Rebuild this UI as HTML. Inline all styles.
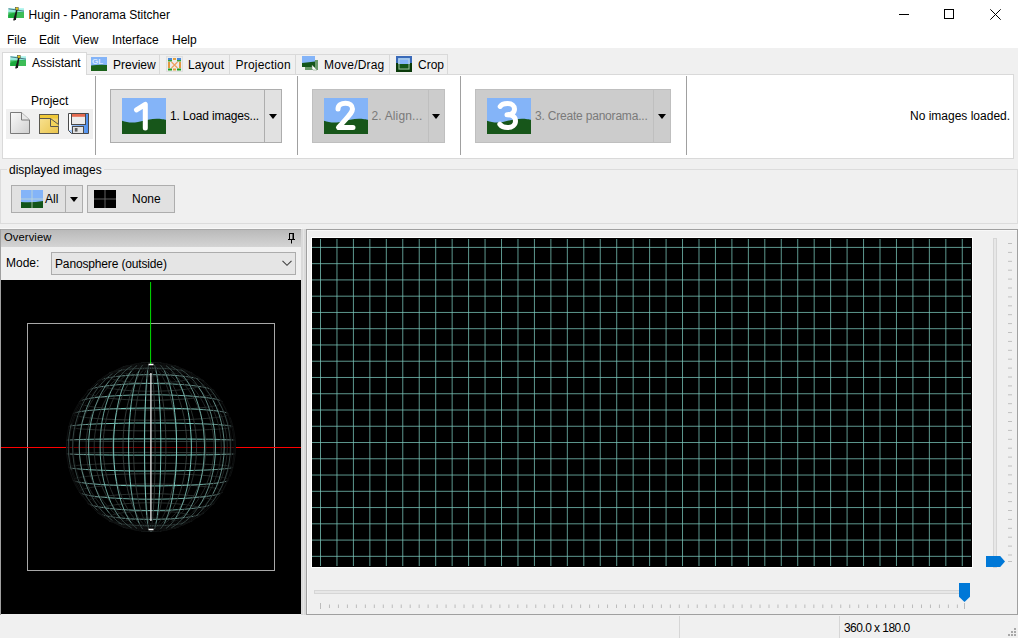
<!DOCTYPE html>
<html><head><meta charset="utf-8">
<style>
*{margin:0;padding:0;box-sizing:border-box}
html,body{width:1018px;height:638px;overflow:hidden;background:#f0f0f0;font-family:"Liberation Sans",sans-serif;font-size:12px;color:#000}
.a{position:absolute}
.t{position:absolute;font-size:12px;line-height:14px;white-space:nowrap}
#titlebar{left:0;top:0;width:1018px;height:48px;background:#fff}
.tab{position:absolute;top:54px;height:21px;border:1px solid #d9d9d9;border-bottom:none;background:#f0f0f0}
.tab.sel{top:52px;height:23px;background:#fff;z-index:2}
#panel{left:2px;top:74px;width:1012px;height:85px;background:#fff;border:1px solid #d9d9d9}
.sep{position:absolute;width:1px;background:#a0a0a0}
.btn{position:absolute;background:#e1e1e1;border:1px solid #adadad}
.btn.dis{background:#cccccc;border-color:#bfbfbf}
.split{position:absolute;top:0;bottom:0;width:1px;background:#adadad}
.dis .split{background:#bfbfbf}
.arrow{position:absolute;width:0;height:0;border-left:4.5px solid transparent;border-right:4.5px solid transparent;border-top:5px solid #000}
</style></head><body>
<div id="titlebar" class="a"></div>
<!-- title icon -->
<svg class="a" style="left:8px;top:6px" width="17" height="16" viewBox="0 0 17 16">
<defs><linearGradient id="hg" x1="0" y1="0" x2="0" y2="1"><stop offset="0" stop-color="#c0f8f4"/><stop offset="0.35" stop-color="#90e8d8"/><stop offset="0.5" stop-color="#40c060"/><stop offset="1" stop-color="#30b050"/></linearGradient></defs>
<rect x="0.2" y="2" width="15.8" height="10" fill="url(#hg)"/>
<path d="M0.2 12 L0.2 9 Q6 5.5 16 6.5 L16 12Z" fill="#18a838" opacity="0.85"/>
<path d="M8 7 L16 7 L16 12 L8 12Z" fill="#60d070" opacity="0.5"/>
<path d="M0.5 2.8 Q6 3.5 16 5.2" stroke="#3a6a78" stroke-width="0.9" fill="none"/>
<path d="M9 3.5 L5.8 14.5 M8.6 5 L7.2 14" stroke="#181818" stroke-width="1.4"/>
<rect x="7.6" y="1.4" width="2.6" height="2.6" fill="#e8c818" stroke="#404030" stroke-width="0.5"/>
</svg>
<div class="t" style="left:28.5px;top:7.5px">Hugin - Panorama Stitcher</div>
<!-- window controls -->
<div class="a" style="left:899px;top:14px;width:10px;height:1px;background:#000"></div>
<div class="a" style="left:944px;top:9px;width:10px;height:10px;border:1px solid #000"></div>
<svg class="a" style="left:990px;top:9px" width="11" height="11" viewBox="0 0 11 11"><path d="M0.3 0.3 L10.7 10.7 M10.7 0.3 L0.3 10.7" stroke="#000" stroke-width="1"/></svg>
<!-- menu -->
<div class="t" style="left:7px;top:32.5px">File</div>
<div class="t" style="left:39px;top:32.5px">Edit</div>
<div class="t" style="left:72.5px;top:32.5px">View</div>
<div class="t" style="left:112px;top:32.5px">Interface</div>
<div class="t" style="left:172px;top:32.5px">Help</div>

<!-- tabs -->
<div class="tab" style="left:86px;width:74px"></div>
<div class="tab" style="left:159px;width:71px"></div>
<div class="tab" style="left:229px;width:67px"></div>
<div class="tab" style="left:295px;width:95px"></div>
<div class="tab" style="left:389px;width:59px"></div>
<div id="panel" class="a"></div>
<div class="tab sel" style="left:2px;width:85px"></div>


<!-- tab icons and labels -->
<svg class="a" style="left:10px;top:54px;z-index:3" width="17" height="16" viewBox="0 0 17 16">
<rect x="0.2" y="2" width="15.8" height="10" fill="url(#hg)"/>
<path d="M0.2 12 L0.2 9 Q6 5.5 16 6.5 L16 12Z" fill="#18a838" opacity="0.85"/>
<path d="M8 7 L16 7 L16 12 L8 12Z" fill="#60d070" opacity="0.5"/>
<path d="M0.5 2.8 Q6 3.5 16 5.2" stroke="#3a6a78" stroke-width="0.9" fill="none"/>
<path d="M9 3.5 L5.8 14.5 M8.6 5 L7.2 14" stroke="#181818" stroke-width="1.4"/>
<rect x="7.6" y="1.4" width="2.6" height="2.6" fill="#e8c818" stroke="#404030" stroke-width="0.5"/>
</svg>
<div class="t" style="left:32px;top:55.5px;z-index:3">Assistant</div>
<svg class="a" style="left:91px;top:57px" width="16" height="14" viewBox="0 0 16 14">
<rect x="0" y="0" width="16" height="9" fill="#84b4f8"/>
<path d="M0 8.5 Q8 7.5 16 8 L16 14 L0 14Z" fill="#1a621a"/>
<text x="1" y="7" font-family="Liberation Sans" font-size="8" font-weight="bold" fill="#d8e8ff">GL</text>
</svg>
<div class="t" style="left:113px;top:58px">Preview</div>
<svg class="a" style="left:166px;top:56px" width="17" height="16" viewBox="0 0 17 16">
<rect x="0.5" y="0.5" width="16" height="15" fill="#ececec" stroke="#e0e0e0" stroke-width="1"/>
<rect x="2" y="2" width="4" height="2" fill="#4a8ad8"/><rect x="2" y="4" width="4" height="1.5" fill="#3aa03a"/>
<rect x="11" y="2" width="4" height="2" fill="#4a8ad8"/><rect x="11" y="4" width="4" height="1.5" fill="#3aa03a"/>
<rect x="7" y="2" width="3" height="2" fill="#e0a040"/>
<rect x="2" y="6" width="2" height="6" fill="#e09a40"/><rect x="13" y="6" width="2" height="6" fill="#e09a40"/>
<path d="M5.5 6 L11.5 12 M11.5 6 L5.5 12" stroke="#eea060" stroke-width="1.2"/>
<rect x="2" y="12.5" width="4" height="2" fill="#20a020"/><rect x="11" y="12.5" width="4" height="2" fill="#20a020"/>
<rect x="7" y="12.5" width="3" height="2" fill="#e0a040"/>
</svg>
<div class="t" style="left:188px;top:58px">Layout</div>
<div class="t" style="left:235.5px;top:58px;letter-spacing:0.2px">Projection</div>
<svg class="a" style="left:302px;top:56px" width="18" height="15" viewBox="0 0 18 15">
<rect x="3" y="4" width="13" height="10" fill="#6a9a6a"/>
<rect x="0" y="0" width="13" height="11" fill="#84b4f8"/>
<path d="M0 7 Q7 6 13 5.5 L13 11 L0 11Z" fill="#13551a"/>
<path d="M10 9 L15 14 L11 14 L10 13Z" fill="#fff" stroke="#6a8a6a" stroke-width="0.5"/>
</svg>
<div class="t" style="left:324px;top:58px;letter-spacing:0.2px">Move/Drag</div>
<svg class="a" style="left:396px;top:56px" width="16" height="16" viewBox="0 0 16 16">
<rect x="0" y="0" width="16" height="16" fill="#0a3a0a"/>
<rect x="0" y="0" width="16" height="7" fill="#3a6ab8"/>
<rect x="2" y="2" width="12" height="6" fill="#84b4f8"/>
<rect x="2" y="8" width="12" height="6" fill="#13551a"/>
<rect x="3" y="3" width="10" height="10" fill="none" stroke="#d8e8d8" stroke-width="1" opacity="0.7"/>
</svg>
<div class="t" style="left:418px;top:58px">Crop</div>

<!-- assistant panel content -->
<div class="t" style="left:31px;top:93.5px">Project</div>
<div class="a" style="left:6px;top:109px;width:87px;height:30px;background:#f0f0f0"></div>
<svg class="a" style="left:9px;top:111px" width="22" height="24" viewBox="0 0 22 24">
<defs><linearGradient id="ng" x1="0" y1="0" x2="1" y2="1"><stop offset="0" stop-color="#fafafa"/><stop offset="1" stop-color="#cfcfcf"/></linearGradient>
<linearGradient id="og" x1="0" y1="0" x2="0" y2="1"><stop offset="0" stop-color="#f8e08a"/><stop offset="1" stop-color="#e8c050"/></linearGradient></defs>
<path d="M1.5 1.5 L12.5 1.5 L20.5 9 L20.5 22.5 L1.5 22.5Z" fill="url(#ng)" stroke="#7a7a7a" stroke-width="1"/>
<path d="M12.5 1.5 L12.5 9 L20.5 9" fill="#e8e8e8" stroke="#7a7a7a" stroke-width="1"/>
</svg>
<svg class="a" style="left:39px;top:113px" width="21" height="22" viewBox="0 0 21 22">
<defs><linearGradient id="og2" x1="0" y1="0" x2="1" y2="1"><stop offset="0" stop-color="#f9e498"/><stop offset="1" stop-color="#eac44a"/></linearGradient>
<linearGradient id="sg" x1="0" y1="0" x2="1" y2="0"><stop offset="0" stop-color="#b8d4f8"/><stop offset="1" stop-color="#4a8ef0"/></linearGradient></defs>
<rect x="0.5" y="1.5" width="19" height="19" fill="url(#og2)" stroke="#5a5850" stroke-width="1"/>
<rect x="1" y="2" width="18" height="3.5" fill="#f0c838"/>
<path d="M11.5 5.5 L19.5 11.5 L19.5 13.5 L11.5 13.5Z" fill="#f3d45a"/>
<path d="M0.5 5.5 H11.5 L19.5 11.5 M11.5 5.5 V13.5 H19.5" fill="none" stroke="#5a5850" stroke-width="1"/>
</svg>
<svg class="a" style="left:68px;top:112px" width="22" height="23" viewBox="0 0 22 23">
<path d="M0.5 1.5 H20.5 V21.5 H3.5 L0.5 18.5Z" fill="url(#sg)" stroke="#4a4a4a" stroke-width="1"/>
<rect x="1" y="2" width="2.5" height="16" fill="#fff"/>
<rect x="3.5" y="1.5" width="14" height="11" fill="#ececec" stroke="#4a4a4a" stroke-width="1"/>
<rect x="4" y="2" width="13" height="2.8" fill="#e46a50"/>
<rect x="4.5" y="14.5" width="11" height="7" fill="#e4e4e4" stroke="#4a4a4a" stroke-width="1"/>
<rect x="6.8" y="16" width="2.7" height="3.6" fill="#606060"/>
</svg>
<div class="sep" style="left:95px;top:76px;height:79px"></div>

<!-- step buttons -->
<div class="btn" style="left:110px;top:89px;width:172px;height:54px"><div class="split" style="left:153px"></div></div>
<svg class="a" style="left:122px;top:98px" width="44" height="36" viewBox="0 0 44 36"><rect width="44" height="36" fill="#84b4f8"/><path d="M0 22.8 C5 24.5 10 25.2 16 24 C24 22 30 20.5 36 20.7 C40 20.8 44 21.8 44 21.8 L44 36 L0 36Z" fill="#17561a"/>
<path d="M14.5 11.8 L23.3 6.3 L23.3 30" fill="none" stroke="#fff" stroke-width="5" stroke-linecap="round" stroke-linejoin="round"/></svg>
<div class="t" style="left:170px;top:108.5px;letter-spacing:-0.18px">1. Load images...</div>
<div class="arrow" style="left:269px;top:114px"></div>
<div class="sep" style="left:297px;top:76px;height:79px"></div>

<div class="btn dis" style="left:312px;top:89px;width:133px;height:54px"><div class="split" style="left:115px"></div></div>
<svg class="a" style="left:324px;top:98px" width="44" height="36" viewBox="0 0 44 36"><rect width="44" height="36" fill="#84b4f8"/><path d="M0 22.8 C5 24.5 10 25.2 16 24 C24 22 30 20.5 36 20.7 C40 20.8 44 21.8 44 21.8 L44 36 L0 36Z" fill="#17561a"/>
<path d="M14 11 C14 7 17.5 5.2 21.5 5.2 C25.5 5.2 28.5 7.5 28.5 11 C28.5 15 24 18.5 14.5 29.5 L29 29.5" fill="none" stroke="#fff" stroke-width="5" stroke-linecap="round" stroke-linejoin="round"/></svg>
<div class="t" style="left:371.5px;top:108.5px;color:#7a7a7a;letter-spacing:0.15px">2. Align...</div>
<div class="arrow" style="left:432px;top:114px"></div>
<div class="sep" style="left:460px;top:76px;height:79px"></div>

<div class="btn dis" style="left:475px;top:89px;width:196px;height:54px"><div class="split" style="left:177px"></div></div>
<svg class="a" style="left:487px;top:98px" width="44" height="36" viewBox="0 0 44 36"><rect width="44" height="36" fill="#84b4f8"/><path d="M0 22.8 C5 24.5 10 25.2 16 24 C24 22 30 20.5 36 20.7 C40 20.8 44 21.8 44 21.8 L44 36 L0 36Z" fill="#17561a"/>
<path d="M13.2 8.5 C14.5 6.2 17.5 5.5 20.5 5.5 C25 5.5 27.5 8 27.5 11 C27.5 14.5 24.5 16.8 20 16.8 C25 16.8 28.5 19 28.5 23 C28.5 27 25 29.5 20.5 29.5 C17 29.5 14.5 28.5 12.8 26.2" fill="none" stroke="#fff" stroke-width="5" stroke-linecap="round" stroke-linejoin="round"/></svg>
<div class="t" style="left:535px;top:108.5px;color:#7a7a7a;letter-spacing:-0.2px">3. Create panorama...</div>
<div class="arrow" style="left:658px;top:114px"></div>
<div class="sep" style="left:686px;top:76px;height:79px"></div>
<div class="t" style="left:910px;top:108.5px">No images loaded.</div>

<!-- GEN -->
<!-- displayed images static box -->
<div class="a" style="left:0px;top:169px;width:1018px;height:55px;border:1px solid #dcdcdc;border-right-color:#dcdcdc"></div>
<div class="a" style="left:7px;top:163px;width:97px;height:12px;background:#f0f0f0"></div>
<div class="t" style="left:9px;top:163px">displayed images</div>
<div class="btn" style="left:11px;top:185px;width:72px;height:28px"><div class="split" style="left:53px"></div></div>
<svg class="a" style="left:21px;top:190px" width="22" height="18" viewBox="0 0 22 18">
<rect width="22" height="18" fill="#84b4f8"/><path d="M0 12 Q11 13 22 11 L22 18 L0 18Z" fill="#13551a"/>
<path d="M11 0 V18 M0 9 H22" stroke="#d0e0d0" stroke-width="1" opacity="0.7"/></svg>
<div class="t" style="left:45px;top:191.5px">All</div>
<div class="arrow" style="left:70px;top:197px"></div>
<div class="btn" style="left:87px;top:185px;width:88px;height:28px"></div>
<svg class="a" style="left:94px;top:190px" width="22" height="18" viewBox="0 0 22 18">
<rect width="22" height="18" fill="#000"/><path d="M11 0 V18 M0 9 H22" stroke="#606060" stroke-width="1"/></svg>
<div class="t" style="left:132px;top:191.5px">None</div>

<!-- overview panel -->
<div class="a" style="left:0px;top:228px;width:302px;height:1px;background:#f8f8f8"></div>
<div class="a" style="left:0px;top:229px;width:302px;height:18px;background:linear-gradient(#a8a8a8 0,#a8a8a8 1px,#bababa 1px,#d4d4d4 100%)"></div>
<div class="a" style="left:0px;top:229px;width:1px;height:386px;background:#a0a0a0"></div>
<div class="t" style="left:4px;top:230px;font-size:11.2px;letter-spacing:0.1px">Overview</div>
<svg class="a" style="left:287px;top:232px" width="9" height="12" viewBox="0 0 9 12"><path d="M2 1.5 H7 M2.5 1 V7 M6.5 1 V7 M1 7.5 H8 M4.5 8 V11.5" stroke="#000" stroke-width="1" fill="none"/><rect x="5.5" y="2" width="1" height="5" fill="#000"/></svg>
<div class="t" style="left:6px;top:255.5px">Mode:</div>
<div class="a" style="left:51px;top:252px;width:245px;height:23px;background:#e5e5e5;border:1px solid #acacac"></div>
<div class="t" style="left:55px;top:257px;letter-spacing:-0.15px">Panosphere (outside)</div>
<svg class="a" style="left:282px;top:260px" width="10" height="7" viewBox="0 0 10 7"><path d="M0.5 0.8 L5 5.3 L9.5 0.8" stroke="#404040" stroke-width="1.1" fill="none"/></svg>
<svg class="a" style="left:1px;top:280px" width="300" height="334">
<rect width="300" height="334" fill="#000"/>
<rect x="26.5" y="43.5" width="247" height="247" fill="none" stroke="#a8a8a8" stroke-width="1"/>
<path d="M0 167.5 H300" stroke="#700000" stroke-width="1"/>
<g fill="none" stroke-width="0.85"><path d="M150.0 83.0 150.6 83.1 151.2 83.1 151.7 83.1 152.3 83.1 152.8 83.2 153.3 83.2 153.8 83.3 154.2 83.4 154.6 83.5 155.0 83.5 155.3 83.6 155.6 83.7 155.9 83.8 156.1 83.9 156.2 84.0 156.3 84.2 156.4 84.3 156.4 84.4M143.4 84.5 143.4 84.3 143.4 84.2 143.5 84.1 143.6 84.0 143.8 83.9 144.0 83.8 144.3 83.7 144.6 83.6 144.9 83.5 145.3 83.4 145.8 83.3 146.2 83.3 146.7 83.2 147.2 83.2 147.8 83.1 148.3 83.1 148.9 83.1 149.4 83.1 150.0 83.0M160.3 83.0 161.7 83.2 163.1 83.5 164.3 83.7 165.4 84.0 166.4 84.2 167.2 84.5 167.9 84.8 168.5 85.2 168.9 85.5 169.2 85.8 169.3 86.1 169.2 86.5M130.5 86.3 130.6 86.0 130.7 85.7 131.1 85.3 131.5 85.0 132.1 84.7 132.9 84.4 133.8 84.1 134.8 83.9 136.0 83.6 137.3 83.4 138.6 83.2 140.1 83.0M177.4 87.0 178.7 87.5 179.8 88.0 180.7 88.5 181.3 89.0 181.6 89.5 181.7 90.0 181.6 90.5M118.1 90.3 118.1 89.8 118.3 89.3 118.8 88.8 119.5 88.3 120.4 87.8 121.6 87.3M191.2 93.2 192.3 93.8 193.0 94.5 193.4 95.1 193.4 95.8 193.1 96.5M106.5 96.2 106.4 95.5 106.5 94.9 107.0 94.2 107.9 93.6M203.0 101.2 203.8 101.9 204.2 102.7 204.1 103.4 203.6 104.1M96.0 103.8 95.6 103.1 95.7 102.4 96.2 101.6M213.4 111.1 213.7 111.9 213.5 112.6 212.8 113.3M86.7 113.0 86.2 112.3 86.2 111.6 86.7 110.8M221.4 121.8 221.6 122.5 221.3 123.2 220.4 123.8M79.0 123.6 78.3 122.9 78.2 122.2 78.6 121.6M227.7 133.8 227.8 134.3 227.3 134.9 226.2 135.4M73.1 135.2 72.2 134.7 72.0 134.1M232.0 146.7 232.0 147.0 231.4 147.4 230.2 147.7M69.0 147.6 68.1 147.2 67.7 146.9M234.1 160.2 234.1 160.3 233.5 160.4 232.2 160.5M67.0 160.5 66.0 160.4 65.6 160.2M234.1 173.8 234.1 173.7 233.5 173.6 232.2 173.5M67.0 173.5 66.0 173.6 65.6 173.8M232.0 187.3 232.0 187.0 231.4 186.6 230.2 186.3M69.0 186.4 68.1 186.8 67.7 187.1M227.7 200.2 227.8 199.7 227.3 199.1 226.2 198.6M73.1 198.8 72.2 199.3 72.0 199.9M221.4 212.2 221.6 211.5 221.3 210.8 220.4 210.2M79.0 210.4 78.3 211.1 78.2 211.8 78.6 212.4M213.4 222.9 213.7 222.1 213.5 221.4 212.8 220.7M86.7 221.0 86.2 221.7 86.2 222.4 86.7 223.2M203.0 232.8 203.8 232.1 204.2 231.3 204.1 230.6 203.6 229.9M96.0 230.2 95.6 230.9 95.7 231.6 96.2 232.4M191.2 240.8 192.3 240.2 193.0 239.5 193.4 238.9 193.4 238.2 193.1 237.5M106.5 237.8 106.4 238.5 106.5 239.1 107.0 239.8 107.9 240.4M177.4 247.0 178.7 246.5 179.8 246.0 180.7 245.5 181.3 245.0 181.6 244.5 181.7 244.0 181.6 243.5M118.1 243.7 118.1 244.2 118.3 244.7 118.8 245.2 119.5 245.7 120.4 246.2 121.6 246.7M160.3 251.0 161.7 250.8 163.1 250.5 164.3 250.3 165.4 250.0 166.4 249.8 167.2 249.5 167.9 249.2 168.5 248.8 168.9 248.5 169.2 248.2 169.3 247.9 169.2 247.5M130.5 247.7 130.6 248.0 130.7 248.3 131.1 248.7 131.5 249.0 132.1 249.3 132.9 249.6 133.8 249.9 134.8 250.1 136.0 250.4 137.3 250.6 138.6 250.8 140.1 251.0M150.0 251.0 150.6 250.9 151.2 250.9 151.7 250.9 152.3 250.9 152.8 250.8 153.3 250.8 153.8 250.7 154.2 250.6 154.6 250.5 155.0 250.5 155.3 250.4 155.6 250.3 155.9 250.2 156.1 250.1 156.2 250.0 156.3 249.8 156.4 249.7 156.4 249.6M143.4 249.5 143.4 249.7 143.4 249.8 143.5 249.9 143.6 250.0 143.8 250.1 144.0 250.2 144.3 250.3 144.6 250.4 144.9 250.5 145.3 250.6 145.8 250.7 146.2 250.7 146.7 250.8 147.2 250.8 147.8 250.9 148.3 250.9 148.9 250.9 149.4 250.9 150.0 251.0" stroke="rgb(15, 17, 16)"/><path d="M156.4 84.4 156.4 84.5 156.3 84.6 156.1 84.7 155.9 84.8 155.7 84.9 155.4 85.0 155.1 85.1 154.8 85.2 154.4 85.3 153.9 85.4 153.5 85.4 153.0 85.5 152.5 85.5 152.0 85.6 151.4 85.6 150.9 85.6 150.3 85.6 149.8 85.6 149.2 85.6 148.7 85.6 148.1 85.6 147.6 85.6 147.1 85.5 146.6 85.5 146.1 85.4 145.7 85.3 145.3 85.3 144.9 85.2 144.6 85.1 144.3 85.0 144.0 84.9 143.8 84.8 143.6 84.7 143.5 84.6 143.4 84.5M169.2 86.5 169.1 86.8 168.7 87.1 168.3 87.4 167.7 87.7 166.9 88.0 166.1 88.3 165.1 88.6 164.1 88.8 162.9 89.0 161.7 89.2 160.3 89.4 158.9 89.6 157.4 89.7 155.9 89.8 154.4 89.9M144.8 89.9 143.3 89.8 141.8 89.6 140.3 89.5 138.9 89.3 137.6 89.1 136.4 88.9 135.3 88.7 134.3 88.5 133.4 88.2 132.6 87.9 131.9 87.6 131.3 87.3 130.9 87.0 130.7 86.7 130.5 86.3M181.6 90.5 181.2 91.0 180.6 91.5 179.8 92.0 178.7 92.5 177.5 92.9 176.1 93.3 174.5 93.7M124.7 93.6 123.1 93.2 121.8 92.7 120.6 92.3 119.7 91.8 118.9 91.3 118.4 90.8 118.1 90.3M193.1 96.5 192.5 97.1 191.6 97.7 190.4 98.3 188.9 98.9 187.1 99.4M111.9 99.2 110.3 98.6 108.9 98.1 107.8 97.5 107.0 96.8 106.5 96.2M203.6 104.1 202.7 104.8 201.5 105.5 199.9 106.1 197.9 106.8M101.1 106.5 99.3 105.9 97.8 105.2 96.7 104.5 96.0 103.8M212.8 113.3 211.6 114.0 210.0 114.7 208.1 115.3M93.1 115.7 90.9 115.1 89.1 114.4 87.7 113.7 86.7 113.0M220.4 123.8 219.0 124.4 217.1 125.1 214.8 125.6M84.0 125.4 81.9 124.8 80.2 124.2 79.0 123.6M226.2 135.4 224.6 135.9 222.5 136.4 219.9 136.8M78.8 136.6 76.4 136.2 74.5 135.7 73.1 135.2M230.2 147.7 228.5 148.0 226.2 148.3M75.2 148.5 72.6 148.2 70.6 147.9 69.0 147.6M232.2 160.5 230.4 160.6 228.0 160.7M73.4 160.8 70.8 160.7 68.6 160.6 67.0 160.5M232.2 173.5 230.4 173.4 228.0 173.3M73.4 173.2 70.8 173.3 68.6 173.4 67.0 173.5M230.2 186.3 228.5 186.0 226.2 185.7M75.2 185.5 72.6 185.8 70.6 186.1 69.0 186.4M226.2 198.6 224.6 198.1 222.5 197.6 219.9 197.2M78.8 197.4 76.4 197.8 74.5 198.3 73.1 198.8M220.4 210.2 219.0 209.6 217.1 208.9 214.8 208.4M84.0 208.6 81.9 209.2 80.2 209.8 79.0 210.4M212.8 220.7 211.6 220.0 210.0 219.3 208.1 218.7M93.1 218.3 90.9 218.9 89.1 219.6 87.7 220.3 86.7 221.0M203.6 229.9 202.7 229.2 201.5 228.5 199.9 227.9 197.9 227.2M101.1 227.5 99.3 228.1 97.8 228.8 96.7 229.5 96.0 230.2M193.1 237.5 192.5 236.9 191.6 236.3 190.4 235.7 188.9 235.1 187.1 234.6M111.9 234.8 110.3 235.4 108.9 235.9 107.8 236.5 107.0 237.2 106.5 237.8M181.6 243.5 181.2 243.0 180.6 242.5 179.8 242.0 178.7 241.5 177.5 241.1 176.1 240.7 174.5 240.3M124.7 240.4 123.1 240.8 121.8 241.3 120.6 241.7 119.7 242.2 118.9 242.7 118.4 243.2 118.1 243.7M169.2 247.5 169.1 247.2 168.7 246.9 168.3 246.6 167.7 246.3 166.9 246.0 166.1 245.7 165.1 245.4 164.1 245.2 162.9 245.0 161.7 244.8 160.3 244.6 158.9 244.4 157.4 244.3 155.9 244.2 154.4 244.1M144.8 244.1 143.3 244.2 141.8 244.4 140.3 244.5 138.9 244.7 137.6 244.9 136.4 245.1 135.3 245.3 134.3 245.5 133.4 245.8 132.6 246.1 131.9 246.4 131.3 246.7 130.9 247.0 130.7 247.3 130.5 247.7M156.4 249.6 156.4 249.5 156.3 249.4 156.1 249.3 155.9 249.2 155.7 249.1 155.4 249.0 155.1 248.9 154.8 248.8 154.4 248.7 153.9 248.6 153.5 248.6 153.0 248.5 152.5 248.5 152.0 248.4 151.4 248.4 150.9 248.4 150.3 248.4 149.8 248.4 149.2 248.4 148.7 248.4 148.1 248.4 147.6 248.4 147.1 248.5 146.6 248.5 146.1 248.6 145.7 248.7 145.3 248.7 144.9 248.8 144.6 248.9 144.3 249.0 144.0 249.1 143.8 249.2 143.6 249.3 143.5 249.4 143.4 249.5" stroke="rgb(25, 29, 29)"/><path d="M154.4 89.9 152.8 90.0 151.2 90.0 149.6 90.0 148.0 90.0 146.4 89.9 144.8 89.9M174.5 93.7 172.7 94.1 170.8 94.4 168.7 94.7 166.6 95.0 164.3 95.2 162.0 95.4 159.5 95.6 157.0 95.7 154.5 95.8 152.0 95.9 149.4 95.9 146.8 95.8 144.3 95.8 141.8 95.7 139.3 95.5 136.9 95.3 134.6 95.1 132.3 94.9 130.2 94.6 128.2 94.3 126.4 93.9 124.7 93.6M187.1 99.4 185.1 99.9 182.9 100.4 180.5 100.9 177.9 101.3 175.1 101.6 172.2 102.0 169.1 102.2M132.5 102.4 129.4 102.1 126.4 101.8 123.6 101.5 120.9 101.1 118.3 100.7 116.0 100.2 113.8 99.7 111.9 99.2M197.9 106.8 195.7 107.4 193.2 107.9 190.4 108.4 187.3 108.9 184.1 109.4M114.4 109.2 111.2 108.7 108.3 108.2 105.6 107.7 103.2 107.1 101.1 106.5M208.1 115.3 205.7 115.9 203.0 116.5 200.0 117.1 196.7 117.6M105.2 117.9 101.7 117.4 98.6 116.9 95.7 116.3 93.1 115.7M214.8 125.6 212.1 126.2 209.0 126.7 205.6 127.2M96.4 127.5 92.8 127.0 89.5 126.5 86.6 126.0 84.0 125.4M219.9 136.8 217.0 137.2 213.6 137.7 209.8 138.0M88.4 137.9 84.8 137.5 81.6 137.1 78.8 136.6M226.2 148.3 223.4 148.6 220.2 148.9 216.7 149.2 212.7 149.4M85.5 149.3 81.7 149.1 78.2 148.8 75.2 148.5M228.0 160.7 225.2 160.8 221.9 160.9 218.2 161.0M84.0 161.1 80.1 161.0 76.5 160.9 73.4 160.8M228.0 173.3 225.2 173.2 221.9 173.1 218.2 173.0M84.0 172.9 80.1 173.0 76.5 173.1 73.4 173.2M226.2 185.7 223.4 185.4 220.2 185.1 216.7 184.8 212.7 184.6M85.5 184.7 81.7 184.9 78.2 185.2 75.2 185.5M219.9 197.2 217.0 196.8 213.6 196.3 209.8 196.0M88.4 196.1 84.8 196.5 81.6 196.9 78.8 197.4M214.8 208.4 212.1 207.8 209.0 207.3 205.6 206.8M96.4 206.5 92.8 207.0 89.5 207.5 86.6 208.0 84.0 208.6M208.1 218.7 205.7 218.1 203.0 217.5 200.0 216.9 196.7 216.4M105.2 216.1 101.7 216.6 98.6 217.1 95.7 217.7 93.1 218.3M197.9 227.2 195.7 226.6 193.2 226.1 190.4 225.6 187.3 225.1 184.1 224.6M114.4 224.8 111.2 225.3 108.3 225.8 105.6 226.3 103.2 226.9 101.1 227.5M187.1 234.6 185.1 234.1 182.9 233.6 180.5 233.1 177.9 232.7 175.1 232.4 172.2 232.0 169.1 231.8M132.5 231.6 129.4 231.9 126.4 232.2 123.6 232.5 120.9 232.9 118.3 233.3 116.0 233.8 113.8 234.3 111.9 234.8M174.5 240.3 172.7 239.9 170.8 239.6 168.7 239.3 166.6 239.0 164.3 238.8 162.0 238.6 159.5 238.4 157.0 238.3 154.5 238.2 152.0 238.1 149.4 238.1 146.8 238.2 144.3 238.2 141.8 238.3 139.3 238.5 136.9 238.7 134.6 238.9 132.3 239.1 130.2 239.4 128.2 239.7 126.4 240.1 124.7 240.4M154.4 244.1 152.8 244.0 151.2 244.0 149.6 244.0 148.0 244.0 146.4 244.1 144.8 244.1" stroke="rgb(36, 42, 41)"/><path d="M169.1 102.2 166.0 102.5 162.7 102.7 159.4 102.8 156.0 102.9 152.6 103.0 149.2 103.0 145.8 103.0 142.4 102.9 139.1 102.8 135.8 102.6 132.5 102.4M184.1 109.4 180.7 109.7 177.1 110.1 173.3 110.4 169.5 110.7 165.5 110.9 161.5 111.0 157.4 111.1 153.2 111.2 149.1 111.2 144.9 111.2 140.8 111.1 136.7 111.0 132.7 110.8 128.8 110.6 125.0 110.3 121.3 110.0 117.7 109.6 114.4 109.2M196.7 117.6 193.2 118.1 189.4 118.5 185.4 118.9 181.2 119.2 176.9 119.5 172.4 119.7 167.8 119.9M134.7 120.0 130.1 119.9 125.6 119.6 121.2 119.4 116.9 119.1 112.8 118.7 108.9 118.3 105.2 117.9M205.6 127.2 201.9 127.6 197.9 128.0 193.6 128.4 189.2 128.8 184.5 129.1M118.1 129.2 113.4 128.9 108.8 128.6 104.4 128.3 100.3 127.9 96.4 127.5M209.8 138.0 205.8 138.4 201.4 138.7 196.9 139.0 192.0 139.3M105.8 139.2 101.1 138.9 96.6 138.6 92.4 138.2 88.4 137.9M212.7 149.4 208.4 149.6 203.8 149.8 199.0 150.0M103.8 150.1 98.8 150.0 94.1 149.8 89.6 149.5 85.5 149.3M218.2 161.0 214.1 161.1 209.7 161.2 205.1 161.2 200.1 161.3M97.7 161.3 92.8 161.2 88.3 161.1 84.0 161.1M218.2 173.0 214.1 172.9 209.7 172.8 205.1 172.8 200.1 172.7M97.7 172.7 92.8 172.8 88.3 172.9 84.0 172.9M212.7 184.6 208.4 184.4 203.8 184.2 199.0 184.0M103.8 183.9 98.8 184.0 94.1 184.2 89.6 184.5 85.5 184.7M209.8 196.0 205.8 195.6 201.4 195.3 196.9 195.0 192.0 194.7M105.8 194.8 101.1 195.1 96.6 195.4 92.4 195.8 88.4 196.1M205.6 206.8 201.9 206.4 197.9 206.0 193.6 205.6 189.2 205.2 184.5 204.9M118.1 204.8 113.4 205.1 108.8 205.4 104.4 205.7 100.3 206.1 96.4 206.5M196.7 216.4 193.2 215.9 189.4 215.5 185.4 215.1 181.2 214.8 176.9 214.5 172.4 214.3 167.8 214.1M134.7 214.0 130.1 214.1 125.6 214.4 121.2 214.6 116.9 214.9 112.8 215.3 108.9 215.7 105.2 216.1M184.1 224.6 180.7 224.3 177.1 223.9 173.3 223.6 169.5 223.3 165.5 223.1 161.5 223.0 157.4 222.9 153.2 222.8 149.1 222.8 144.9 222.8 140.8 222.9 136.7 223.0 132.7 223.2 128.8 223.4 125.0 223.7 121.3 224.0 117.7 224.4 114.4 224.8M169.1 231.8 166.0 231.5 162.7 231.3 159.4 231.2 156.0 231.1 152.6 231.0 149.2 231.0 145.8 231.0 142.4 231.1 139.1 231.2 135.8 231.4 132.5 231.6" stroke="rgb(47, 55, 53)"/><path d="M167.8 119.9 163.2 120.1 158.5 120.2 153.7 120.3 148.9 120.3 144.2 120.2 139.4 120.2 134.7 120.0M184.5 129.1 179.7 129.3 174.8 129.5 169.7 129.7 164.6 129.8 159.4 129.9 154.1 130.0 148.8 130.0 143.6 130.0 138.3 129.9 133.2 129.8 128.1 129.6 123.0 129.4 118.1 129.2M192.0 139.3 187.0 139.5 181.9 139.7 176.5 139.9 171.1 140.0 165.6 140.1 160.0 140.2 154.4 140.2 148.8 140.2 143.1 140.2 137.5 140.1 132.0 140.1 126.5 139.9 121.1 139.8 115.9 139.6 110.7 139.4 105.8 139.2M199.0 150.0 194.0 150.2 188.7 150.3 183.3 150.5 177.7 150.6 172.1 150.7 166.3 150.7 160.5 150.8 154.6 150.8 148.7 150.8 142.8 150.8 137.0 150.8 131.2 150.7 125.5 150.6 119.8 150.5 114.3 150.4 109.0 150.3 103.8 150.1M200.1 161.3 194.9 161.4 189.6 161.4 184.0 161.5 178.3 161.5 172.5 161.5 166.7 161.6 160.7 161.6 154.7 161.6 148.7 161.6 142.7 161.6 136.7 161.6 130.8 161.5 124.9 161.5 119.2 161.5 113.6 161.4 108.1 161.4 102.8 161.3 97.7 161.3M200.1 172.7 194.9 172.6 189.6 172.6 184.0 172.5 178.3 172.5 172.5 172.5 166.7 172.4 160.7 172.4 154.7 172.4 148.7 172.4 142.7 172.4 136.7 172.4 130.8 172.5 124.9 172.5 119.2 172.5 113.6 172.6 108.1 172.6 102.8 172.7 97.7 172.7M199.0 184.0 194.0 183.8 188.7 183.7 183.3 183.5 177.7 183.4 172.1 183.3 166.3 183.3 160.5 183.2 154.6 183.2 148.7 183.2 142.8 183.2 137.0 183.2 131.2 183.3 125.5 183.4 119.8 183.5 114.3 183.6 109.0 183.7 103.8 183.9M192.0 194.7 187.0 194.5 181.9 194.3 176.5 194.1 171.1 194.0 165.6 193.9 160.0 193.8 154.4 193.8 148.8 193.8 143.1 193.8 137.5 193.9 132.0 193.9 126.5 194.1 121.1 194.2 115.9 194.4 110.7 194.6 105.8 194.8M184.5 204.9 179.7 204.7 174.8 204.5 169.7 204.3 164.6 204.2 159.4 204.1 154.1 204.0 148.8 204.0 143.6 204.0 138.3 204.1 133.2 204.2 128.1 204.4 123.0 204.6 118.1 204.8M167.8 214.1 163.2 213.9 158.5 213.8 153.7 213.7 148.9 213.7 144.2 213.8 139.4 213.8 134.7 214.0" stroke="rgb(58, 67, 65)"/><path d="M150.3 82.5 152.0 82.5 153.8 82.5 155.5 82.6 157.2 82.7 158.8 82.9 160.3 83.0M140.1 83.0 141.7 82.8 143.3 82.7 145.0 82.6 146.7 82.5 148.5 82.5 150.3 82.5M150.5 84.1 153.5 84.1 156.4 84.2 159.3 84.3 162.1 84.5 164.8 84.8 167.4 85.0 169.8 85.4 172.0 85.7 174.0 86.1 175.8 86.5 177.4 87.0M121.6 87.3 123.0 86.8 124.7 86.4 126.6 86.0 128.7 85.6 131.0 85.2 133.4 84.9 136.0 84.7 138.8 84.4 141.6 84.3 144.5 84.2 147.5 84.1 150.5 84.1M180.7 90.3 183.5 90.8 185.9 91.3 188.0 91.9 189.8 92.6 191.2 93.2M107.9 93.6 109.1 92.9 110.7 92.3 112.6 91.7 114.8 91.1 117.4 90.6M195.5 98.4 198.0 99.0 200.1 99.7 201.8 100.5 203.0 101.2M96.2 101.6 97.2 100.9 98.6 100.2 100.4 99.5 102.7 98.8M209.4 108.9 211.3 109.6 212.6 110.4 213.4 111.1M86.7 110.8 87.7 110.1 89.2 109.3 91.3 108.6M217.3 119.8 219.3 120.5 220.7 121.1 221.4 121.8M78.6 121.6 79.6 120.9 81.2 120.2M225.5 132.7 226.9 133.2 227.7 133.8M72.0 134.1 72.3 133.6 73.3 133.0 75.0 132.5M229.9 146.0 231.3 146.3 232.0 146.7M67.7 146.9 68.0 146.6 69.0 146.2 70.7 145.8M232.1 159.9 233.5 160.0 234.1 160.2M65.6 160.2 65.8 160.1 66.8 160.0M232.1 174.1 233.5 174.0 234.1 173.8M65.6 173.8 65.8 173.9 66.8 174.0M229.9 188.0 231.3 187.7 232.0 187.3M67.7 187.1 68.0 187.4 69.0 187.8 70.7 188.2M225.5 201.3 226.9 200.8 227.7 200.2M72.0 199.9 72.3 200.4 73.3 201.0 75.0 201.5M217.3 214.2 219.3 213.5 220.7 212.9 221.4 212.2M78.6 212.4 79.6 213.1 81.2 213.8M209.4 225.1 211.3 224.4 212.6 223.6 213.4 222.9M86.7 223.2 87.7 223.9 89.2 224.7 91.3 225.4M195.5 235.6 198.0 235.0 200.1 234.3 201.8 233.5 203.0 232.8M96.2 232.4 97.2 233.1 98.6 233.8 100.4 234.5 102.7 235.2M180.7 243.7 183.5 243.2 185.9 242.7 188.0 242.1 189.8 241.4 191.2 240.8M107.9 240.4 109.1 241.1 110.7 241.7 112.6 242.3 114.8 242.9 117.4 243.4M150.5 249.9 153.5 249.9 156.4 249.8 159.3 249.7 162.1 249.5 164.8 249.2 167.4 249.0 169.8 248.6 172.0 248.3 174.0 247.9 175.8 247.5 177.4 247.0M121.6 246.7 123.0 247.2 124.7 247.6 126.6 248.0 128.7 248.4 131.0 248.8 133.4 249.1 136.0 249.3 138.8 249.6 141.6 249.7 144.5 249.8 147.5 249.9 150.5 249.9M150.3 251.5 152.0 251.5 153.8 251.5 155.5 251.4 157.2 251.3 158.8 251.1 160.3 251.0M140.1 251.0 141.7 251.2 143.3 251.3 145.0 251.4 146.7 251.5 148.5 251.5 150.3 251.5" stroke="rgb(89, 108, 105)"/><path d="M150.7 88.1 155.0 88.1 159.1 88.2 163.2 88.4 167.1 88.7 170.9 89.0 174.4 89.4 177.7 89.8 180.7 90.3M117.4 90.6 120.2 90.1 123.4 89.6 126.8 89.2 130.4 88.9 134.3 88.6 138.2 88.3 142.3 88.2 146.5 88.1 150.7 88.1M181.1 96.1 185.3 96.6 189.1 97.1 192.5 97.7 195.5 98.4M102.7 98.8 105.5 98.1 108.7 97.5 112.2 96.9 116.2 96.4 120.5 95.9M196.6 106.2 200.6 106.8 204.1 107.5 207.0 108.2 209.4 108.9M91.3 108.6 93.9 107.9 97.1 107.2 100.7 106.6M211.4 118.5 214.7 119.1 217.3 119.8M81.2 120.2 83.5 119.5 86.4 118.9 89.8 118.2M217.2 131.1 220.7 131.6 223.5 132.2 225.5 132.7M75.0 132.5 77.4 131.9 80.4 131.4M224.9 145.3 227.7 145.6 229.9 146.0M70.7 145.8 73.1 145.5 76.3 145.2M227.0 159.7 229.9 159.8 232.1 159.9M66.8 160.0 68.5 159.9 71.0 159.8 74.2 159.6M227.0 174.3 229.9 174.2 232.1 174.1M66.8 174.0 68.5 174.1 71.0 174.2 74.2 174.4M224.9 188.7 227.7 188.4 229.9 188.0M70.7 188.2 73.1 188.5 76.3 188.8M217.2 202.9 220.7 202.4 223.5 201.8 225.5 201.3M75.0 201.5 77.4 202.1 80.4 202.6M211.4 215.5 214.7 214.9 217.3 214.2M81.2 213.8 83.5 214.5 86.4 215.1 89.8 215.8M196.6 227.8 200.6 227.2 204.1 226.5 207.0 225.8 209.4 225.1M91.3 225.4 93.9 226.1 97.1 226.8 100.7 227.4M181.1 237.9 185.3 237.4 189.1 236.9 192.5 236.3 195.5 235.6M102.7 235.2 105.5 235.9 108.7 236.5 112.2 237.1 116.2 237.6 120.5 238.1M150.7 245.9 155.0 245.9 159.1 245.8 163.2 245.6 167.1 245.3 170.9 245.0 174.4 244.6 177.7 244.2 180.7 243.7M117.4 243.4 120.2 243.9 123.4 244.4 126.8 244.8 130.4 245.1 134.3 245.4 138.2 245.7 142.3 245.8 146.5 245.9 150.7 245.9" stroke="rgb(104, 136, 132)"/><path d="M151.0 94.6 156.4 94.6 161.7 94.8 166.9 95.0 171.9 95.3 176.6 95.6 181.1 96.1M120.5 95.9 125.1 95.5 129.9 95.1 135.0 94.9 140.2 94.7 145.6 94.6 151.0 94.6M176.2 104.3 181.9 104.6 187.2 105.1 192.1 105.6 196.6 106.2M100.7 106.6 104.9 106.0 109.6 105.4 114.7 104.9 120.1 104.5 125.9 104.1M192.5 116.3 198.1 116.8 203.1 117.3 207.6 117.9 211.4 118.5M89.8 118.2 93.9 117.6 98.6 117.1 103.9 116.6M208.3 130.1 213.1 130.6 217.2 131.1M80.4 131.4 84.1 130.9 88.5 130.4 93.6 130.0M211.9 144.3 216.9 144.6 221.3 145.0 224.9 145.3M76.3 145.2 80.2 144.8 84.8 144.5M218.9 159.5 223.3 159.6 227.0 159.7M74.2 159.6 78.1 159.5 82.9 159.4M218.9 174.5 223.3 174.4 227.0 174.3M74.2 174.4 78.1 174.5 82.9 174.6M211.9 189.7 216.9 189.4 221.3 189.0 224.9 188.7M76.3 188.8 80.2 189.2 84.8 189.5M208.3 203.9 213.1 203.4 217.2 202.9M80.4 202.6 84.1 203.1 88.5 203.6 93.6 204.0M192.5 217.7 198.1 217.2 203.1 216.7 207.6 216.1 211.4 215.5M89.8 215.8 93.9 216.4 98.6 216.9 103.9 217.4M176.2 229.7 181.9 229.4 187.2 228.9 192.1 228.4 196.6 227.8M100.7 227.4 104.9 228.0 109.6 228.6 114.7 229.1 120.1 229.5 125.9 229.9M151.0 239.4 156.4 239.4 161.7 239.2 166.9 239.0 171.9 238.7 176.6 238.4 181.1 237.9M120.5 238.1 125.1 238.5 129.9 238.9 135.0 239.1 140.2 239.3 145.6 239.4 151.0 239.4" stroke="rgb(117, 166, 159)"/><path d="M151.2 103.5 157.7 103.6 164.0 103.7 170.2 103.9 176.2 104.3M125.9 104.1 132.0 103.8 138.3 103.7 144.7 103.5 151.2 103.5M151.4 114.8 158.8 114.8 166.1 115.0 173.2 115.2 180.0 115.5 186.5 115.8 192.5 116.3M103.9 116.6 109.6 116.1 115.8 115.7 122.5 115.4 129.4 115.1 136.6 114.9 144.0 114.8 151.4 114.8M183.1 128.7 190.2 129.0 196.8 129.3 202.8 129.7 208.3 130.1M93.6 130.0 99.3 129.5 105.6 129.2 112.4 128.8 119.7 128.6M192.7 143.6 199.7 143.8 206.1 144.0 211.9 144.3M84.8 144.5 90.1 144.2 96.2 143.9 102.8 143.7M201.2 159.2 207.8 159.2 213.7 159.3 218.9 159.5M82.9 159.4 88.4 159.3 94.5 159.2 101.4 159.1M201.2 174.8 207.8 174.8 213.7 174.7 218.9 174.5M82.9 174.6 88.4 174.7 94.5 174.8 101.4 174.9M192.7 190.4 199.7 190.2 206.1 190.0 211.9 189.7M84.8 189.5 90.1 189.8 96.2 190.1 102.8 190.3M183.1 205.3 190.2 205.0 196.8 204.7 202.8 204.3 208.3 203.9M93.6 204.0 99.3 204.5 105.6 204.8 112.4 205.2 119.7 205.4M151.4 219.2 158.8 219.2 166.1 219.0 173.2 218.8 180.0 218.5 186.5 218.2 192.5 217.7M103.9 217.4 109.6 217.9 115.8 218.3 122.5 218.6 129.4 218.9 136.6 219.1 144.0 219.2 151.4 219.2M151.2 230.5 157.7 230.4 164.0 230.3 170.2 230.1 176.2 229.7M125.9 229.9 132.0 230.2 138.3 230.3 144.7 230.5 151.2 230.5" stroke="rgb(129, 198, 188)"/><path d="M151.5 128.1 159.7 128.1 167.8 128.3 175.6 128.4 183.1 128.7M119.7 128.6 127.3 128.3 135.2 128.2 143.4 128.1 151.5 128.1M151.6 143.0 160.3 143.0 168.9 143.1 177.2 143.2 185.2 143.4 192.7 143.6M102.8 143.7 110.0 143.5 117.7 143.3 125.9 143.1 134.3 143.0 142.9 143.0 151.6 143.0M151.7 158.9 160.7 158.9 169.5 158.9 178.1 159.0 186.3 159.0 194.0 159.1 201.2 159.2M101.4 159.1 108.8 159.0 116.7 159.0 125.1 158.9 133.8 158.9 142.7 158.9 151.7 158.9M151.7 175.1 160.7 175.1 169.5 175.1 178.1 175.0 186.3 175.0 194.0 174.9 201.2 174.8M101.4 174.9 108.8 175.0 116.7 175.0 125.1 175.1 133.8 175.1 142.7 175.1 151.7 175.1M151.6 191.0 160.3 191.0 168.9 190.9 177.2 190.8 185.2 190.6 192.7 190.4M102.8 190.3 110.0 190.5 117.7 190.7 125.9 190.9 134.3 191.0 142.9 191.0 151.6 191.0M151.5 205.9 159.7 205.9 167.8 205.7 175.6 205.6 183.1 205.3M119.7 205.4 127.3 205.7 135.2 205.8 143.4 205.9 151.5 205.9" stroke="rgb(139, 232, 218)"/><path d="M149.9 249.9 150.6 251.0 151.3 251.6M151.3 82.4 150.6 83.0 149.9 84.1M149.9 249.9 151.7 251.0 153.6 251.5M153.6 82.5 151.7 83.0 149.9 84.1M149.9 249.9 152.8 250.9 155.8 251.3 158.9 251.1M158.9 82.9 155.8 82.7 152.8 83.1 149.9 84.1M149.9 249.9 153.8 250.8 157.9 251.1 162.0 250.7M162.0 83.3 157.9 82.9 153.8 83.2 149.9 84.1M149.9 249.9 154.8 250.7 159.7 250.8 164.7 250.3M164.7 83.7 159.7 83.2 154.8 83.3 149.9 84.1M149.9 249.9 155.5 250.5 161.3 250.5 167.0 249.8 172.8 248.4M172.8 85.6 167.0 84.2 161.3 83.5 155.5 83.5 149.9 84.1M149.9 249.9 156.2 250.3 162.5 250.1 168.9 249.2 175.2 247.7 181.4 245.5M181.4 88.5 175.2 86.3 168.9 84.8 162.5 83.9 156.2 83.7 149.9 84.1M149.9 249.9 156.7 250.1 163.5 249.7 170.2 248.6 177.0 246.9 183.5 244.5 189.9 241.5 196.1 237.9M196.1 96.1 189.9 92.5 183.5 89.5 177.0 87.1 170.2 85.4 163.5 84.3 156.7 83.9 149.9 84.1M149.9 249.9 157.0 249.9 164.1 249.2 171.1 248.0 178.0 246.1 184.7 243.5 191.3 240.4 197.5 236.6 203.4 232.3 208.9 227.5 214.0 222.1 218.6 216.3 222.7 210.1 226.2 203.5 229.2 196.6M229.2 137.4 226.2 130.5 222.7 123.9 218.6 117.7 214.0 111.9 208.9 106.5 203.4 101.7 197.5 97.4 191.3 93.6 184.7 90.5 178.0 87.9 171.1 86.0 164.1 84.8 157.0 84.1 149.9 84.1M149.9 249.9 157.1 249.7 164.3 248.8 171.4 247.3 178.3 245.2 185.0 242.5 191.5 239.2 197.7 235.4 203.5 231.0 208.9 226.1 213.9 220.8 218.4 215.0 222.3 208.9 225.7 202.4 228.5 195.7 230.8 188.7 232.4 181.6 233.3 174.3 233.7 167.0 233.3 159.7 232.4 152.4 230.8 145.3 228.5 138.3 225.7 131.6 222.3 125.1 218.4 119.0 213.9 113.2 208.9 107.9 203.5 103.0 197.7 98.6 191.5 94.8 185.0 91.5 178.3 88.8 171.4 86.7 164.3 85.2 157.1 84.3 149.9 84.1M149.9 249.9 142.7 249.5M142.7 84.5 149.9 84.1M149.9 249.9 142.7 249.7 135.5 248.9 128.4 247.5 121.5 245.4 114.7 242.7 108.2 239.5 102.0 235.7 96.2 231.3 90.8 226.4 85.8 221.1 81.2 215.3 77.2 209.1 73.8 202.7 70.9 195.9 68.7 188.9 67.1 181.7 66.1 174.4 65.8 167.0 66.1 159.6 67.1 152.3 68.7 145.1 70.9 138.1 73.8 131.3 77.2 124.9 81.2 118.7 85.8 112.9 90.8 107.6 96.2 102.7 102.0 98.3 108.2 94.5 114.7 91.3 121.5 88.6 128.4 86.5 135.5 85.1 142.7 84.3 149.9 84.1M149.9 249.9 142.9 249.9 135.8 249.3 128.9 248.1 122.0 246.2 115.3 243.7 108.7 240.6 102.5 236.9 96.6 232.6 91.1 227.8 86.0 222.4 81.4 216.6M81.4 117.4 86.0 111.6 91.1 106.2 96.6 101.4 102.5 97.1 108.7 93.4 115.3 90.3 122.0 87.8 128.9 85.9 135.8 84.7 142.9 84.1 149.9 84.1M149.9 249.9 143.2 250.2 136.5 249.8 129.8 248.8 123.2 247.1 116.7 244.7 110.3 241.8M110.3 92.2 116.7 89.3 123.2 86.9 129.8 85.2 136.5 84.2 143.2 83.8 149.9 84.1M149.9 249.9 143.7 250.4 137.5 250.2 131.3 249.4 125.1 247.9M125.1 86.1 131.3 84.6 137.5 83.8 143.7 83.6 149.9 84.1M149.9 249.9 144.4 250.5 138.9 250.6 133.3 249.9 127.7 248.6M127.7 85.4 133.3 84.1 138.9 83.4 144.4 83.5 149.9 84.1M149.9 249.9 145.2 250.7 140.5 250.9 135.7 250.4M135.7 83.6 140.5 83.1 145.2 83.3 149.9 84.1M149.9 249.9 146.2 250.8 142.4 251.1 138.5 250.8M138.5 83.2 142.4 82.9 146.2 83.2 149.9 84.1M149.9 249.9 147.2 250.9 144.4 251.4M144.4 82.6 147.2 83.1 149.9 84.1M149.9 249.9 148.3 251.0 146.7 251.5M146.7 82.5 148.3 83.0 149.9 84.1M149.9 249.9 149.5 251.0 149.0 251.6M149.0 82.4 149.5 83.0 149.9 84.1" stroke="rgb(3, 3, 3)"/><path d="M149.9 249.9 157.1 249.4 164.2 248.4 171.1 246.7 177.9 244.4 184.5 241.5 190.8 238.1 196.7 234.2 202.3 229.7 207.5 224.8 212.2 219.5 216.4 213.8 220.2 207.8 223.4 201.4 226.1 194.8 228.1 188.1 229.7 181.1 230.6 174.1 230.9 167.0 230.6 159.9 229.7 152.9 228.1 145.9 226.1 139.2 223.4 132.6 220.2 126.2 216.4 120.2 212.2 114.5 207.5 109.2 202.3 104.3 196.7 99.8 190.8 95.9 184.5 92.5 177.9 89.6 171.1 87.3 164.2 85.6 157.1 84.6 149.9 84.1M149.9 249.9 156.9 249.2 163.7 247.9 170.4 246.0 176.9 243.6 183.1 240.6 189.0 237.0 194.6 233.0 199.9 228.5 204.7 223.6 209.1 218.3 213.0 212.7 216.5 206.7 219.5 200.5M219.5 133.5 216.5 127.3 213.0 121.3 209.1 115.7 204.7 110.4 199.9 105.5 194.6 101.0 189.0 97.0 183.1 93.4 176.9 90.4 170.4 88.0 163.7 86.1 156.9 84.8 149.9 84.1M149.9 249.9 156.5 249.0 162.9 247.5 169.2 245.4 175.2 242.8 181.0 239.7 186.5 236.0 191.6 231.9M191.6 102.1 186.5 98.0 181.0 94.3 175.2 91.2 169.2 88.6 162.9 86.5 156.5 85.0 149.9 84.1M149.9 249.9 155.9 248.8 161.8 247.1 167.5 244.9 173.0 242.1 178.2 238.9M178.2 95.1 173.0 91.9 167.5 89.1 161.8 86.9 155.9 85.2 149.9 84.1M149.9 249.9 155.2 248.6 160.4 246.8 165.4 244.4 170.2 241.5M170.2 92.5 165.4 89.6 160.4 87.2 155.2 85.4 149.9 84.1M149.9 249.9 154.4 248.5 158.8 246.5 163.0 244.0M163.0 90.0 158.8 87.5 154.4 85.5 149.9 84.1M149.9 249.9 153.5 248.4 157.0 246.3 160.3 243.6M160.3 90.4 157.0 87.7 153.5 85.6 149.9 84.1M149.9 249.9 152.5 248.3 155.0 246.1 157.4 243.4M157.4 90.6 155.0 87.9 152.5 85.7 149.9 84.1M149.9 249.9 151.4 248.2 152.9 246.0 154.3 243.2M154.3 90.8 152.9 88.0 151.4 85.8 149.9 84.1M149.9 249.9 150.3 248.2 150.7 245.9 151.1 243.1M151.1 90.9 150.7 88.1 150.3 85.8 149.9 84.1M149.9 249.9 149.2 248.2 148.6 245.9 147.9 243.1M147.9 90.9 148.6 88.1 149.2 85.8 149.9 84.1M149.9 249.9 148.1 248.2 146.4 246.0 144.8 243.2M144.8 90.8 146.4 88.0 148.1 85.8 149.9 84.1M149.9 249.9 147.1 248.3 144.3 246.1 141.7 243.4M141.7 90.6 144.3 87.9 147.1 85.7 149.9 84.1M149.9 249.9 146.1 248.4 142.4 246.3 138.9 243.7M138.9 90.3 142.4 87.7 146.1 85.6 149.9 84.1M149.9 249.9 145.2 248.5 140.6 246.6 136.2 244.1 132.0 241.1M132.0 92.9 136.2 89.9 140.6 87.4 145.2 85.5 149.9 84.1M149.9 249.9 144.4 248.7 139.0 246.9 133.9 244.5 128.9 241.6M128.9 92.4 133.9 89.5 139.0 87.1 144.4 85.3 149.9 84.1M149.9 249.9 143.7 248.9 137.7 247.2 131.9 245.0 126.3 242.3 121.0 239.0M121.0 95.0 126.3 91.7 131.9 89.0 137.7 86.8 143.7 85.1 149.9 84.1M149.9 249.9 143.2 249.1 136.7 247.6 130.3 245.6 124.2 243.0 118.3 239.9 112.7 236.2 107.4 232.2 102.6 227.6M102.6 106.4 107.4 101.8 112.7 97.8 118.3 94.1 124.2 91.0 130.3 88.4 136.7 86.4 143.2 84.9 149.9 84.1M149.9 249.9 142.9 249.3 136.0 248.0 129.2 246.2 122.6 243.8 116.3 240.8 110.3 237.3 104.6 233.3 99.3 228.8 94.4 223.9 89.9 218.6 85.9 212.9 82.3 206.9 79.3 200.7 76.8 194.2 74.9 187.6 73.5 180.8 72.6 173.9 72.3 167.0 72.6 160.1 73.5 153.2 74.9 146.4 76.8 139.8 79.3 133.3 82.3 127.1 85.9 121.1 89.9 115.4 94.4 110.1 99.3 105.2 104.6 100.7 110.3 96.7 116.3 93.2 122.6 90.2 129.2 87.8 136.0 86.0 142.9 84.7 149.9 84.1M142.7 249.5 135.6 248.5 128.6 246.8 121.7 244.6 115.1 241.7 108.8 238.3 102.8 234.4 97.1 230.0 91.9 225.1 87.1 219.8 82.8 214.1 79.0 208.0 75.7 201.6 73.0 195.0 70.9 188.2 69.4 181.2 68.5 174.1 68.2 167.0 68.5 159.9 69.4 152.8 70.9 145.8 73.0 139.0 75.7 132.4 79.0 126.0 82.8 119.9 87.1 114.2 91.9 108.9 97.1 104.0 102.8 99.6 108.8 95.7 115.1 92.3 121.7 89.4 128.6 87.2 135.6 85.5 142.7 84.5" stroke="rgb(15, 17, 17)"/><path d="M219.5 200.5 221.9 194.1 223.8 187.5 225.2 180.7 226.0 173.9 226.3 167.0 226.0 160.1 225.2 153.3 223.8 146.5 221.9 139.9 219.5 133.5M191.6 231.9 196.4 227.4 200.8 222.5 204.8 217.2 208.4 211.6 211.5 205.8 214.1 199.7 216.4 193.4 218.1 186.9 219.3 180.3 220.1 173.7 220.3 167.0 220.1 160.3 219.3 153.7 218.1 147.1 216.4 140.6 214.1 134.3 211.5 128.2 208.4 122.4 204.8 116.8 200.8 111.5 196.4 106.6 191.6 102.1M178.2 238.9 183.1 235.1 187.7 231.0 191.9 226.4 195.8 221.5 199.4 216.2 202.5 210.7 205.3 204.9M205.3 129.1 202.5 123.3 199.4 117.8 195.8 112.5 191.9 107.6 187.7 103.0 183.1 98.9 178.2 95.1M170.2 241.5 174.7 238.1 179.0 234.3 183.0 230.1 186.7 225.5 190.0 220.6M190.0 113.4 186.7 108.5 183.0 103.9 179.0 99.7 174.7 95.9 170.2 92.5M163.0 244.0 167.0 241.0 170.8 237.5 174.4 233.6 177.7 229.4M177.7 104.6 174.4 100.4 170.8 96.5 167.0 93.0 163.0 90.0M160.3 243.6 163.5 240.6 166.5 237.0 169.3 233.1 171.9 228.8M171.9 105.2 169.3 100.9 166.5 97.0 163.5 93.4 160.3 90.4M157.4 243.4 159.7 240.2 161.8 236.6 163.8 232.7M163.8 101.3 161.8 97.4 159.7 93.8 157.4 90.6M154.3 243.2 155.7 240.0 156.9 236.4 158.1 232.4M158.1 101.6 156.9 97.6 155.7 94.0 154.3 90.8M151.1 243.1 151.5 239.9 151.9 236.3 152.2 232.3M152.2 101.7 151.9 97.7 151.5 94.1 151.1 90.9M147.9 243.1 147.4 239.9 146.8 236.3 146.3 232.3M146.3 101.7 146.8 97.7 147.4 94.1 147.9 90.9M144.8 243.2 143.2 240.1 141.8 236.4 140.4 232.4M140.4 101.6 141.8 97.6 143.2 93.9 144.8 90.8M141.7 243.4 139.3 240.3 136.9 236.7 134.8 232.8M134.8 101.2 136.9 97.3 139.3 93.7 141.7 90.6M138.9 243.7 135.5 240.6 132.3 237.1 129.4 233.2 126.6 228.9M126.6 105.1 129.4 100.8 132.3 96.9 135.5 93.4 138.9 90.3M132.0 241.1 128.1 237.7 124.4 233.8 120.9 229.5 117.7 224.9M117.7 109.1 120.9 104.5 124.4 100.2 128.1 96.3 132.0 92.9M128.9 241.6 124.2 238.3 119.8 234.5 115.7 230.3 111.9 225.7 108.4 220.8M108.4 113.2 111.9 108.3 115.7 103.7 119.8 99.5 124.2 95.7 128.9 92.4M121.0 239.0 115.9 235.3 111.2 231.2 106.8 226.6 102.8 221.7 99.1 216.4 95.9 210.9 93.0 205.1 90.6 199.1M90.6 134.9 93.0 128.9 95.9 123.1 99.1 117.6 102.8 112.3 106.8 107.4 111.2 102.8 115.9 98.7 121.0 95.0M102.6 227.6 98.1 222.7 94.0 217.4 90.3 211.9 87.1 206.0 84.4 199.8 82.1 193.5 80.3 187.0 79.1 180.4 78.3 173.7 78.0 167.0 78.3 160.3 79.1 153.6 80.3 147.0 82.1 140.5 84.4 134.2 87.1 128.0 90.3 122.1 94.0 116.6 98.1 111.3 102.6 106.4" stroke="rgb(36, 42, 41)"/><path d="M205.3 204.9 207.6 198.9 209.6 192.8 211.1 186.4 212.2 180.0 212.8 173.5 213.0 167.0 212.8 160.5 212.2 154.0 211.1 147.6 209.6 141.2 207.6 135.1 205.3 129.1M190.0 220.6 193.1 215.4 195.8 209.9 198.1 204.2 200.1 198.3 201.8 192.2 203.1 186.0 204.0 179.7 204.5 173.4 204.7 167.0 204.5 160.6 204.0 154.3 203.1 148.0 201.8 141.8 200.1 135.7 198.1 129.8 195.8 124.1 193.1 118.6 190.0 113.4M177.7 229.4 180.7 224.8 183.5 219.8 186.0 214.6 188.2 209.2 190.2 203.6 191.8 197.7 193.2 191.8M193.2 142.2 191.8 136.3 190.2 130.4 188.2 124.8 186.0 119.4 183.5 114.2 180.7 109.2 177.7 104.6M171.9 228.8 174.2 224.2 176.4 219.2 178.4 214.1 180.1 208.7M180.1 125.3 178.4 119.9 176.4 114.8 174.2 109.8 171.9 105.2M163.8 232.7 165.6 228.4 167.3 223.7 168.9 218.8 170.3 213.6M170.3 120.4 168.9 115.2 167.3 110.3 165.6 105.6 163.8 101.3M158.1 232.4 159.2 228.1 160.1 223.4 161.0 218.5 161.9 213.3M161.9 120.7 161.0 115.5 160.1 110.6 159.2 105.9 158.1 101.6M152.2 232.3 152.5 227.9 152.8 223.3 153.0 218.4M153.0 115.6 152.8 110.7 152.5 106.1 152.2 101.7M146.3 232.3 145.8 227.9 145.4 223.3 145.0 218.4M145.0 115.6 145.4 110.7 145.8 106.1 146.3 101.7M140.4 232.4 139.2 228.1 138.0 223.5 137.0 218.6 136.1 213.4M136.1 120.6 137.0 115.4 138.0 110.5 139.2 105.9 140.4 101.6M134.8 232.8 132.7 228.4 130.9 223.8 129.2 218.9 127.7 213.7M127.7 120.3 129.2 115.1 130.9 110.2 132.7 105.6 134.8 101.2M126.6 228.9 124.1 224.3 121.8 219.4 119.7 214.2 117.8 208.8 116.2 203.2M116.2 130.8 117.8 125.2 119.7 119.8 121.8 114.6 124.1 109.7 126.6 105.1M117.7 224.9 114.8 220.0 112.2 214.8 109.8 209.3 107.8 203.7 106.1 197.8 104.7 191.9 103.6 185.7M103.6 148.3 104.7 142.1 106.1 136.2 107.8 130.3 109.8 124.7 112.2 119.2 114.8 114.0 117.7 109.1M108.4 220.8 105.3 215.5 102.5 210.1 100.0 204.3 97.9 198.4 96.2 192.3 94.9 186.1 93.9 179.8 93.3 173.4 93.2 167.0 93.3 160.6 93.9 154.2 94.9 147.9 96.2 141.7 97.9 135.6 100.0 129.7 102.5 123.9 105.3 118.5 108.4 113.2M90.6 199.1 88.6 192.9 87.1 186.5 86.0 180.1 85.3 173.6 85.1 167.0 85.3 160.4 86.0 153.9 87.1 147.5 88.6 141.1 90.6 134.9" stroke="rgb(47, 55, 53)"/><path d="M193.2 191.8 194.2 185.7 195.0 179.5 195.4 173.3 195.6 167.0 195.4 160.7 195.0 154.5 194.2 148.3 193.2 142.2M180.1 208.7 181.6 203.1 182.9 197.3 183.9 191.4 184.7 185.4 185.3 179.3 185.7 173.2 185.8 167.0 185.7 160.8 185.3 154.7 184.7 148.6 183.9 142.6 182.9 136.7 181.6 130.9 180.1 125.3M170.3 213.6 171.5 208.3 172.6 202.7 173.5 197.0 174.2 191.1 174.8 185.2 175.2 179.2 175.4 173.1 175.5 167.0 175.4 160.9 175.2 154.8 174.8 148.8 174.2 142.9 173.5 137.0 172.6 131.3 171.5 125.7 170.3 120.4M161.9 213.3 162.6 208.0 163.2 202.5 163.7 196.8 164.1 191.0 164.5 185.0 164.7 179.1 164.9 173.0 164.9 167.0 164.9 161.0 164.7 154.9 164.5 149.0 164.1 143.0 163.7 137.2 163.2 131.5 162.6 126.0 161.9 120.7M153.0 218.4 153.3 213.2 153.5 207.9 153.6 202.3 153.8 196.7 153.9 190.9 154.0 185.0 154.1 179.0 154.1 173.0 154.1 167.0 154.1 161.0 154.1 155.0 154.0 149.0 153.9 143.1 153.8 137.3 153.6 131.7 153.5 126.1 153.3 120.8 153.0 115.6M145.0 218.4 144.6 213.2 144.3 207.9 144.0 202.4 143.8 196.7 143.6 190.9 143.5 185.0 143.4 179.0 143.3 173.0 143.3 167.0 143.3 161.0 143.4 155.0 143.5 149.0 143.6 143.1 143.8 137.3 144.0 131.6 144.3 126.1 144.6 120.8 145.0 115.6M136.1 213.4 135.2 208.0 134.5 202.5 133.9 196.8 133.4 191.0 133.0 185.1 132.7 179.1 132.6 173.1 132.5 167.0 132.6 160.9 132.7 154.9 133.0 148.9 133.4 143.0 133.9 137.2 134.5 131.5 135.2 126.0 136.1 120.6M127.7 213.7 126.4 208.3 125.2 202.8 124.2 197.0 123.4 191.2 122.8 185.2 122.3 179.2 122.1 173.1 122.0 167.0 122.1 160.9 122.3 154.8 122.8 148.8 123.4 142.8 124.2 137.0 125.2 131.2 126.4 125.7 127.7 120.3M116.2 203.2 114.9 197.4 113.8 191.5 112.9 185.4 112.3 179.3 111.9 173.2 111.8 167.0 111.9 160.8 112.3 154.7 112.9 148.6 113.8 142.5 114.9 136.6 116.2 130.8M103.6 185.7 102.8 179.5 102.3 173.3 102.1 167.0 102.3 160.7 102.8 154.5 103.6 148.3" stroke="rgb(58, 67, 65)"/><path d="M151.3 251.6 152.1 251.4 152.8 250.6 153.6 249.0M153.6 85.0 152.8 83.4 152.1 82.6 151.3 82.4M153.6 251.5 155.6 251.3 157.5 250.4 159.5 248.8M159.5 85.2 157.5 83.6 155.6 82.7 153.6 82.5M158.9 251.1 162.0 250.1 165.0 248.4M165.0 85.6 162.0 83.9 158.9 82.9M162.0 250.7 166.1 249.7 170.2 247.9M170.2 86.1 166.1 84.3 162.0 83.3M164.7 250.3 169.7 249.1 174.7 247.2 179.6 244.6M179.6 89.4 174.7 86.8 169.7 84.9 164.7 83.7M172.8 248.4 178.5 246.4 184.1 243.7 189.5 240.2 194.7 236.2M194.7 97.8 189.5 93.8 184.1 90.3 178.5 87.6 172.8 85.6M181.4 245.5 187.5 242.6 193.4 239.1 199.0 234.9 204.3 230.1 209.2 224.8M209.2 109.2 204.3 103.9 199.0 99.1 193.4 94.9 187.5 91.4 181.4 88.5M196.1 237.9 201.9 233.6 207.4 228.8 212.5 223.5 217.1 217.6 221.2 211.3 224.8 204.5 227.7 197.4 230.1 190.1 231.8 182.5 232.8 174.8 233.1 167.0 232.8 159.2 231.8 151.5 230.1 143.9 227.7 136.6 224.8 129.5 221.2 122.7 217.1 116.4 212.5 110.5 207.4 105.2 201.9 100.4 196.1 96.1M229.2 196.6 231.5 189.4 233.1 182.0 234.2 174.5 234.5 167.0 234.2 159.5 233.1 152.0 231.5 144.6 229.2 137.4M81.4 216.6 77.3 210.3 73.7 203.7 70.8 196.8 68.4 189.5 66.8 182.1 65.8 174.6 65.4 167.0 65.8 159.4 66.8 151.9 68.4 144.5 70.8 137.2 73.7 130.3 77.3 123.7 81.4 117.4M110.3 241.8 104.2 238.2 98.4 233.9 92.9 229.1 87.9 223.7 83.3 217.9 79.2 211.5 75.6 204.8 72.7 197.6 70.3 190.2M70.3 143.8 72.7 136.4 75.6 129.2 79.2 122.5 83.3 116.1 87.9 110.3 92.9 104.9 98.4 100.1 104.2 95.8 110.3 92.2M125.1 247.9 118.9 245.7 113.0 242.9 107.2 239.4 101.6 235.2 96.4 230.4M96.4 103.6 101.6 98.8 107.2 94.6 113.0 91.1 118.9 88.3 125.1 86.1M127.7 248.6 122.1 246.6 116.7 243.9 111.4 240.5M111.4 93.5 116.7 90.1 122.1 87.4 127.7 85.4M135.7 250.4 130.9 249.2 126.1 247.4 121.3 244.8M121.3 89.2 126.1 86.6 130.9 84.8 135.7 83.6M138.5 250.8 134.6 249.8 130.7 248.0M130.7 86.0 134.6 84.2 138.5 83.2M144.4 251.4 141.6 251.1 138.8 250.2 136.0 248.5M136.0 85.5 138.8 83.8 141.6 82.9 144.4 82.6M146.7 251.5 145.0 251.3 143.3 250.5 141.6 248.9M141.6 85.1 143.3 83.5 145.0 82.7 146.7 82.5M149.0 251.6 148.5 251.4 148.0 250.6 147.6 249.0M147.6 85.0 148.0 83.4 148.5 82.6 149.0 82.4" stroke="rgb(16, 19, 19)"/><path d="M153.6 249.0 154.3 246.7 155.0 243.7M155.0 90.3 154.3 87.3 153.6 85.0M159.5 248.8 161.4 246.5 163.3 243.4M163.3 90.6 161.4 87.5 159.5 85.2M165.0 248.4 168.1 246.0 171.1 242.9 174.0 239.0M174.0 95.0 171.1 91.1 168.1 88.0 165.0 85.6M170.2 247.9 174.2 245.4 178.2 242.2 182.0 238.2M182.0 95.8 178.2 91.8 174.2 88.6 170.2 86.1M179.6 244.6 184.4 241.3 189.0 237.3 193.3 232.6 197.4 227.2M197.4 106.8 193.3 101.4 189.0 96.7 184.4 92.7 179.6 89.4M194.7 236.2 199.6 231.4 204.2 226.0 208.4 220.1 212.1 213.6M212.1 120.4 208.4 113.9 204.2 108.0 199.6 102.6 194.7 97.8M209.2 224.8 213.7 218.9 217.7 212.4 221.2 205.6 224.1 198.3 226.4 190.8 228.0 183.0 229.1 175.0 229.4 167.0 229.1 159.0 228.0 151.0 226.4 143.2 224.1 135.7 221.2 128.4 217.7 121.6 213.7 115.1 209.2 109.2M70.3 190.2 68.7 182.6 67.6 174.8 67.3 167.0 67.6 159.2 68.7 151.4 70.3 143.8M96.4 230.4 91.5 225.1 87.1 219.1 83.1 212.7 79.7 205.8 76.8 198.5 74.6 190.9 72.9 183.1 71.9 175.1 71.6 167.0 71.9 158.9 72.9 150.9 74.6 143.1 76.8 135.5 79.7 128.2 83.1 121.3 87.1 114.9 91.5 108.9 96.4 103.6M111.4 240.5 106.3 236.4 101.5 231.7 97.0 226.3 92.9 220.3 89.2 213.8M89.2 120.2 92.9 113.7 97.0 107.7 101.5 102.3 106.3 97.6 111.4 93.5M121.3 244.8 116.7 241.5 112.3 237.5 108.1 232.8M108.1 101.2 112.3 96.5 116.7 92.5 121.3 89.2M130.7 248.0 126.9 245.6 123.1 242.3 119.5 238.4M119.5 95.6 123.1 91.7 126.9 88.4 130.7 86.0M136.0 248.5 133.2 246.1 130.4 243.0M130.4 91.0 133.2 87.9 136.0 85.5M141.6 248.9 140.0 246.6 138.3 243.5M138.3 90.5 140.0 87.4 141.6 85.1M147.6 249.0 147.1 246.7 146.6 243.7M146.6 90.3 147.1 87.3 147.6 85.0" stroke="rgb(60, 79, 77)"/><path d="M155.0 243.7 155.8 239.8 156.4 235.2M156.4 98.8 155.8 94.2 155.0 90.3M163.3 243.4 165.1 239.5 166.9 234.9 168.6 229.6M168.6 104.4 166.9 99.1 165.1 94.5 163.3 90.6M174.0 239.0 176.8 234.3 179.4 229.0M179.4 105.0 176.8 99.7 174.0 95.0M182.0 238.2 185.7 233.6 189.1 228.2 192.2 222.2 195.1 215.5M195.1 118.5 192.2 111.8 189.1 105.8 185.7 100.4 182.0 95.8M197.4 227.2 201.2 221.2 204.6 214.6 207.5 207.5 210.0 200.0 211.9 192.1M211.9 141.9 210.0 134.0 207.5 126.5 204.6 119.4 201.2 112.8 197.4 106.8M212.1 213.6 215.4 206.6 218.2 199.2 220.3 191.5 221.9 183.5 222.9 175.3 223.2 167.0 222.9 158.7 221.9 150.5 220.3 142.5 218.2 134.8 215.4 127.4 212.1 120.4M89.2 213.8 86.0 206.8 83.3 199.4 81.1 191.6 79.6 183.6 78.6 175.3 78.3 167.0 78.6 158.7 79.6 150.4 81.1 142.4 83.3 134.6 86.0 127.2 89.2 120.2M108.1 232.8 104.1 227.4 100.5 221.4 97.2 214.8 94.3 207.7 92.0 200.2M92.0 133.8 94.3 126.3 97.2 119.2 100.5 112.6 104.1 106.6 108.1 101.2M119.5 238.4 116.0 233.7 112.8 228.4 109.8 222.4M109.8 111.6 112.8 105.6 116.0 100.3 119.5 95.6M130.4 243.0 127.7 239.1 125.2 234.5 122.8 229.1M122.8 104.9 125.2 99.5 127.7 94.9 130.4 91.0M138.3 243.5 136.7 239.6 135.2 235.0 133.7 229.7M133.7 104.3 135.2 99.0 136.7 94.4 138.3 90.5M146.6 243.7 146.2 239.8 145.7 235.2M145.7 98.8 146.2 94.2 146.6 90.3" stroke="rgb(109, 155, 148)"/><path d="M156.4 235.2 157.1 229.9 157.7 223.8 158.2 217.1M158.2 116.9 157.7 110.2 157.1 104.1 156.4 98.8M168.6 229.6 170.1 223.5 171.5 216.8 172.7 209.5M172.7 124.5 171.5 117.2 170.1 110.5 168.6 104.4M179.4 229.0 181.8 223.0 183.9 216.3 185.8 209.0 187.4 201.3M187.4 132.7 185.8 125.0 183.9 117.7 181.8 111.0 179.4 105.0M195.1 215.5 197.5 208.4 199.6 200.7 201.3 192.6 202.5 184.3 203.2 175.7 203.5 167.0 203.2 158.3 202.5 149.7 201.3 141.4 199.6 133.3 197.5 125.6 195.1 118.5M211.9 192.1 213.4 183.9 214.2 175.5 214.5 167.0 214.2 158.5 213.4 150.1 211.9 141.9M92.0 200.2 90.0 192.2 88.7 184.0 87.8 175.5 87.6 167.0 87.8 158.5 88.7 150.0 90.0 141.8 92.0 133.8M109.8 222.4 107.1 215.7 104.7 208.5 102.7 200.8 101.1 192.7 100.0 184.3 99.3 175.7 99.1 167.0 99.3 158.3 100.0 149.7 101.1 141.3 102.7 133.2 104.7 125.5 107.1 118.3 109.8 111.6M122.8 229.1 120.5 223.1 118.5 216.4 116.8 209.1 115.3 201.4M115.3 132.6 116.8 124.9 118.5 117.6 120.5 110.9 122.8 104.9M133.7 229.7 132.4 223.6 131.2 216.9 130.1 209.6M130.1 124.4 131.2 117.1 132.4 110.4 133.7 104.3M145.7 235.2 145.3 229.9 144.9 223.8 144.6 217.1M144.6 116.9 144.9 110.2 145.3 104.1 145.7 98.8" stroke="rgb(124, 191, 181)"/><path d="M158.2 217.1 158.7 209.7 159.1 201.9 159.4 193.6 159.6 184.9 159.8 176.0 159.8 167.0 159.8 158.0 159.6 149.1 159.4 140.4 159.1 132.1 158.7 124.3 158.2 116.9M172.7 209.5 173.7 201.7 174.6 193.4 175.2 184.8 175.5 176.0 175.6 167.0 175.5 158.0 175.2 149.2 174.6 140.6 173.7 132.3 172.7 124.5M187.4 201.3 188.7 193.1 189.6 184.6 190.2 175.8 190.4 167.0 190.2 158.2 189.6 149.4 188.7 140.9 187.4 132.7M115.3 201.4 114.1 193.2 113.3 184.6 112.7 175.9 112.6 167.0 112.7 158.1 113.3 149.4 114.1 140.8 115.3 132.6M130.1 209.6 129.3 201.7 128.5 193.4 128.0 184.8 127.7 176.0 127.6 167.0 127.7 158.0 128.0 149.2 128.5 140.6 129.3 132.3 130.1 124.4M144.6 217.1 144.3 209.8 144.0 201.9 143.8 193.6 143.7 184.9 143.6 176.0 143.6 167.0 143.6 158.0 143.7 149.1 143.8 140.4 144.0 132.1 144.3 124.2 144.6 116.9" stroke="rgb(138, 229, 216)"/></g>
<path d="M0 167.5 H65 M235 167.5 H300" stroke="#ff0000" stroke-width="1"/>
<path d="M149.6 2 V84" stroke="#00e000" stroke-width="1"/>
<path d="M149.9 93 V241" stroke="#dcdcdc" stroke-width="1.4"/>
<path d="M147.5 84.5 H152.5 M147.5 249.5 H152.5" stroke="#fff" stroke-width="1.5"/>
</svg>
<!-- sash -->
<div class="a" style="left:301px;top:229px;width:5px;height:386px;background:#dadada"></div>
<div class="a" style="left:303px;top:229px;width:1px;height:386px;background:#e6e6e6"></div>
<!-- main preview panel -->
<div class="a" style="left:306px;top:229px;width:712px;height:386px;border:1px solid #a0a0a0;border-right-color:#a0a0a0;background:#f0f0f0"></div>
<div class="a" style="left:307px;top:230px;width:710px;height:1px;background:#f8f8f8"></div>
<div class="a" style="left:307px;top:230px;width:1px;height:384px;background:#f8f8f8"></div>
<div class="a" style="left:311px;top:237px;width:662px;height:331px;background:#fff"></div>
<svg class="a" style="left:312px;top:238px" width="660" height="329"><rect width="660" height="329" fill="#000"/><path d="M8.50 1V328 M24.96 1V328 M41.41 1V328 M57.87 1V328 M74.32 1V328 M90.78 1V328 M107.24 1V328 M123.69 1V328 M140.15 1V328 M156.60 1V328 M173.06 1V328 M189.52 1V328 M205.97 1V328 M222.43 1V328 M238.88 1V328 M255.34 1V328 M271.80 1V328 M288.25 1V328 M304.71 1V328 M321.16 1V328 M337.62 1V328 M354.08 1V328 M370.53 1V328 M386.99 1V328 M403.44 1V328 M419.90 1V328 M436.36 1V328 M452.81 1V328 M469.27 1V328 M485.72 1V328 M502.18 1V328 M518.64 1V328 M535.09 1V328 M551.55 1V328 M568.00 1V328 M584.46 1V328 M600.92 1V328 M617.37 1V328 M633.83 1V328 M650.28 1V328 M0 9.40H659 M0 25.66H659 M0 41.92H659 M0 58.18H659 M0 74.44H659 M0 90.70H659 M0 106.96H659 M0 123.22H659 M0 139.48H659 M0 155.74H659 M0 172.00H659 M0 188.26H659 M0 204.52H659 M0 220.78H659 M0 237.04H659 M0 253.30H659 M0 269.56H659 M0 285.82H659 M0 302.08H659 M0 318.34H659" stroke="#7ccabe" stroke-width="0.75" fill="none"/></svg>
<!-- vertical slider -->
<div class="a" style="left:993px;top:238px;width:4px;height:330px;background:#e7e7e7;border:1px solid #d6d6d6"></div>
<svg class="a" style="left:1007px;top:238px" width="6" height="330"><path d="M1 5.50H5M1 14.40H5M1 23.30H5M1 32.20H5M1 41.10H5M1 50.00H5M1 58.90H5M1 67.80H5M1 76.70H5M1 85.60H5M1 94.50H5M1 103.40H5M1 112.30H5M1 121.20H5M1 130.10H5M1 139.00H5M1 147.90H5M1 156.80H5M1 165.70H5M1 174.60H5M1 183.50H5M1 192.40H5M1 201.30H5M1 210.20H5M1 219.10H5M1 228.00H5M1 236.90H5M1 245.80H5M1 254.70H5M1 263.60H5M1 272.50H5M1 281.40H5M1 290.30H5M1 299.20H5M1 308.10H5M1 317.00H5M1 323.5H5" stroke="#c0c0c0" stroke-width="1"/></svg>
<svg class="a" style="left:986px;top:556px" width="19" height="11" viewBox="0 0 19 11"><path d="M0 0 H14.2 L19 5.5 L14.2 11 H0Z" fill="#0078d7"/></svg>
<!-- horizontal slider -->
<div class="a" style="left:314px;top:590px;width:650px;height:4px;background:#e7e7e7;border:1px solid #d6d6d6"></div>
<svg class="a" style="left:314px;top:600px" width="660" height="12"><path d="M6.50 4.5V8M15.47 4.5V8M24.44 4.5V8M33.41 4.5V8M42.38 4.5V8M51.35 4.5V8M60.32 4.5V8M69.29 4.5V8M78.26 4.5V8M87.23 4.5V8M96.20 4.5V8M105.17 4.5V8M114.14 4.5V8M123.11 4.5V8M132.08 4.5V8M141.05 4.5V8M150.02 4.5V8M158.99 4.5V8M167.96 4.5V8M176.93 4.5V8M185.90 4.5V8M194.87 4.5V8M203.84 4.5V8M212.81 4.5V8M221.78 4.5V8M230.75 4.5V8M239.72 4.5V8M248.69 4.5V8M257.66 4.5V8M266.63 4.5V8M275.60 4.5V8M284.57 4.5V8M293.54 4.5V8M302.51 4.5V8M311.48 4.5V8M320.45 4.5V8M329.42 4.5V8M338.39 4.5V8M347.36 4.5V8M356.33 4.5V8M365.30 4.5V8M374.27 4.5V8M383.24 4.5V8M392.21 4.5V8M401.18 4.5V8M410.15 4.5V8M419.12 4.5V8M428.09 4.5V8M437.06 4.5V8M446.03 4.5V8M455.00 4.5V8M463.97 4.5V8M472.94 4.5V8M481.91 4.5V8M490.88 4.5V8M499.85 4.5V8M508.82 4.5V8M517.79 4.5V8M526.76 4.5V8M535.73 4.5V8M544.70 4.5V8M553.67 4.5V8M562.64 4.5V8M571.61 4.5V8M580.58 4.5V8M589.55 4.5V8M598.52 4.5V8M607.49 4.5V8M616.46 4.5V8M625.43 4.5V8M634.40 4.5V8M643.37 4.5V8M6.5 3V9M650.5 3V9" stroke="#bcbcbc" stroke-width="1"/></svg>
<svg class="a" style="left:959px;top:583px" width="11" height="19" viewBox="0 0 11 19"><path d="M0 0 H11 V13.8 L5.5 19 L0 13.8Z" fill="#0078d7"/></svg>

<!-- status bar -->
<div class="sep" style="left:679px;top:616px;height:22px;background:#d6d6d6"></div>
<div class="sep" style="left:839px;top:616px;height:22px;background:#d6d6d6"></div>
<div class="t" style="left:844px;top:620.5px;letter-spacing:-0.55px">360.0 x 180.0</div>
<svg class="a" style="left:1008px;top:628px" width="8" height="8" viewBox="0 0 8 8" fill="#a8a8a8"><rect x="6" y="0" width="2" height="2"/><rect x="3" y="3" width="2" height="2"/><rect x="6" y="3" width="2" height="2"/><rect x="0" y="6" width="2" height="2"/><rect x="3" y="6" width="2" height="2"/><rect x="6" y="6" width="2" height="2"/></svg>
<!-- /GEN --><div id="content"></div>
</body></html>
